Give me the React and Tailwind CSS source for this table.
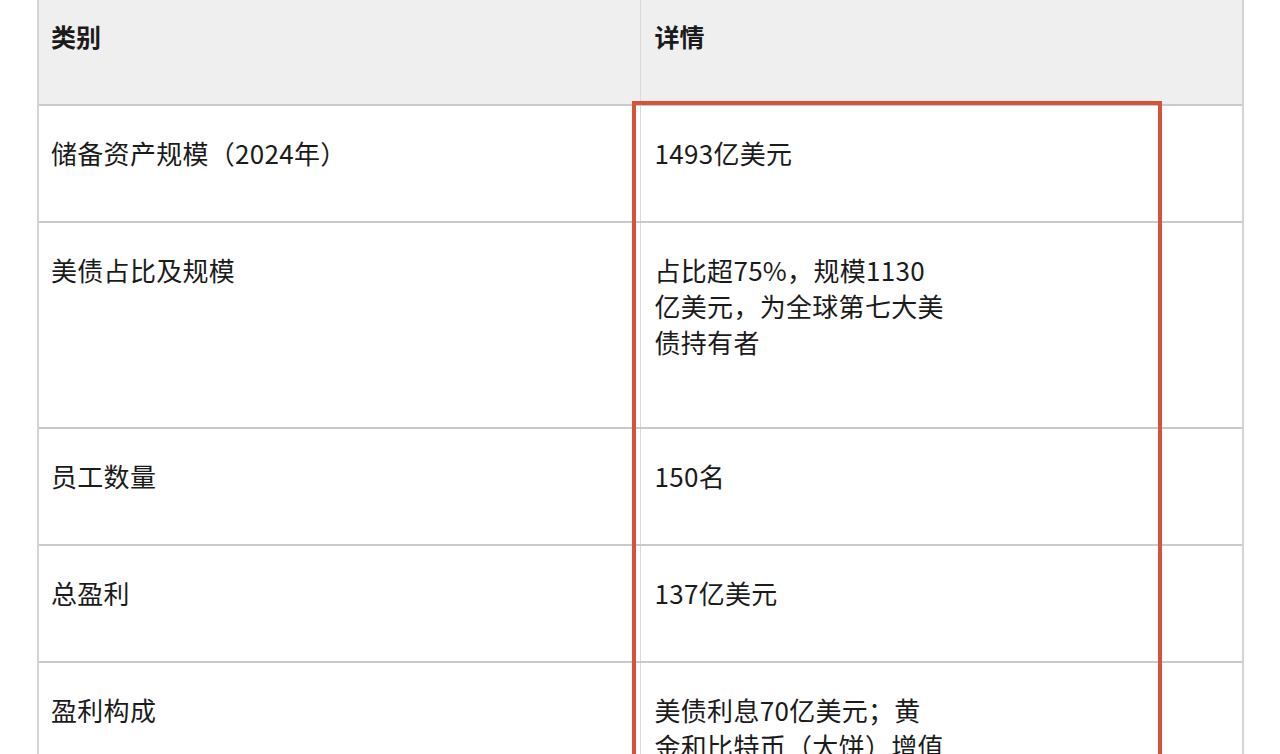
import React from "react";

const rows = [
  { label: "储备资产规模（2024年）", detail: ["1493亿美元"], h: "h-[117px]" },
  {
    label: "美债占比及规模",
    detail: ["占比超75%，规模1130", "亿美元，为全球第七大美", "债持有者"],
    h: "h-[206px]",
  },
  { label: "员工数量", detail: ["150名"], h: "h-[117px]" },
  { label: "总盈利", detail: ["137亿美元"], h: "h-[117px]" },
  {
    label: "盈利构成",
    detail: ["美债利息70亿美元；黄", "金和比特币（大饼）增值"],
    h: "h-[206px]",
  },
];

const App = () => {
  return (
    <div
      className="relative w-[1280px] h-[754px] overflow-hidden bg-white text-[#1b1b1b]"
      style={{ fontFamily: '"Noto Sans CJK SC", "Noto Sans", sans-serif' }}
    >
      <div className="ml-[37px] w-[1207px] border-l-2 border-r-2 border-[#d4d4d4]">
        {/* Header */}
        <div className="grid grid-cols-2 h-[106px] bg-[#efefef] border-b-2 border-[#c9c9c9]">
          <div className="pl-[12px] pt-[18px] text-[25px] leading-[36px] font-bold border-r border-[#dadada]">
            类别
          </div>
          <div className="pl-[14px] pt-[18px] text-[25px] leading-[36px] font-bold">
            详情
          </div>
        </div>

        {/* Rows */}
        {rows.map((r, i) => (
          <div
            key={i}
            className={`grid grid-cols-2 ${r.h} border-b-2 border-[#c9c9c9]`}
          >
            <div className="pl-[12px] pt-[29px] text-[26px] leading-[36px] tracking-[0.3px] border-r border-[#dadada]">
              {r.label}
            </div>
            <div className="pl-[14px] pt-[29px] text-[26px] leading-[36px] tracking-[0.3px] whitespace-nowrap">
              {r.detail.map((line, j) => (
                <div key={j}>{line}</div>
              ))}
            </div>
          </div>
        ))}
      </div>

      {/* annotation box */}
      <div className="absolute left-[632px] top-[101px] w-[530px] h-[700px] border-[4px] border-[#d6533a]" />
    </div>
  );
};

export default App;
